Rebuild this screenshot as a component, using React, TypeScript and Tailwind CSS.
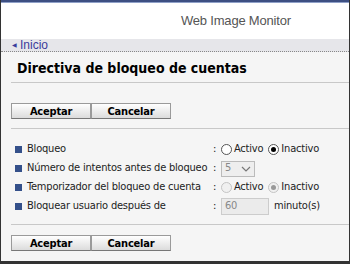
const Boton = ({ texto }: { texto: string }) => (
  <button className="w-[80px] h-[16px] flex items-center justify-center border border-[#9a9a9a] border-b-[#777] bg-gradient-to-b from-white to-[#dcdcdc] text-[11px] font-bold text-black leading-none">
    {texto}
  </button>
);

const Radio = ({ marcado, desactivado }: { marcado: boolean; desactivado?: boolean }) => (
  <span
    className={`w-[11px] h-[11px] rounded-full border flex items-center justify-center ${
      desactivado ? "border-[#c4c4c4] bg-[#f0f0f0]" : "border-[#555] bg-white"
    }`}
  >
    {marcado && (
      <span className={`w-[5px] h-[5px] rounded-full ${desactivado ? "bg-[#999]" : "bg-black"}`} />
    )}
  </span>
);

const Fila = ({ etiqueta, children }: { etiqueta: string; children: React.ReactNode }) => (
  <div className="flex items-center h-[19px] whitespace-nowrap">
    <span className="w-[7px] h-[7px] bg-[#34508a] ml-[4px] mr-[5px]" />
    <span className="w-[186px]">{etiqueta}</span>
    <span className="w-[8px]">:</span>
    <div className="flex items-center">{children}</div>
  </div>
);

export default function App() {
  return (
    <div
      className="w-[350px] h-[264px] bg-[#f5f5f5] border-x border-b-[3px] border-x-[#333] border-b-[#333] flex flex-col text-[11px] tracking-[-0.2px] text-[#222] overflow-hidden"
      style={{ fontFamily: '"DejaVu Sans Condensed", "DejaVu Sans", Verdana, sans-serif' }}
    >
      <div className="h-[3px] bg-[#3d4f82] border-b border-[#8fa0c8]" />
      <div className="h-[36px] bg-white flex items-center pl-[180px]">
        <span
          className="text-[13px] tracking-[-0.2px] text-[#555]"
          style={{ fontFamily: '"Liberation Sans", Arial, sans-serif' }}
        >
          Web Image Monitor
        </span>
      </div>
      <div
        className="h-[13px] bg-[#e6e6ea] border-b border-dotted border-[#888] flex items-center pl-[11px] text-[12px] tracking-normal text-[#3b3b9b]"
        style={{ fontFamily: '"Liberation Sans", Arial, sans-serif' }}
      >
        <span className="text-[6px] mr-[3px]">◀</span>
        Inicio
      </div>
      <div className="pl-[10px]">
        <div className="border-b border-[#c8c8c8] pl-[6px] pt-[9px] pb-[7px]">
          <h1 className="text-[14px] tracking-normal font-bold text-black leading-[14px]">
            Directiva de bloqueo de cuentas
          </h1>
        </div>
        <div className="flex pt-[20px] pb-[9px] border-b border-[#c8c8c8]">
          <Boton texto="Aceptar" />
          <Boton texto="Cancelar" />
        </div>
        <div className="pt-[11px] pb-[8px] border-b border-[#c8c8c8]">
          <Fila etiqueta="Bloqueo">
            <Radio marcado={false} />
            <span className="ml-[2px] mr-[5px]">Activo</span>
            <Radio marcado />
            <span className="ml-[2px]">Inactivo</span>
          </Fila>
          <Fila etiqueta="Número de intentos antes de bloqueo">
            <div className="w-[34px] h-[16px] border border-[#bbb] bg-[#eee] text-[#888] flex items-center justify-between px-[3px]">
              <span>5</span>
              <svg width="10" height="6" viewBox="0 0 10 6" fill="none" stroke="#777" strokeWidth="1.2">
                <path d="M1 1l4 4 4-4" />
              </svg>
            </div>
          </Fila>
          <Fila etiqueta="Temporizador del bloqueo de cuenta">
            <Radio marcado={false} desactivado />
            <span className="ml-[2px] mr-[5px]">Activo</span>
            <Radio marcado desactivado />
            <span className="ml-[2px]">Inactivo</span>
          </Fila>
          <Fila etiqueta="Bloquear usuario después de">
            <div className="w-[48px] h-[17px] border border-[#ccc] bg-[#ebebeb] text-[#888] flex items-center px-[3px]">
              60
            </div>
            <span className="ml-[5px]">minuto(s)</span>
          </Fila>
        </div>
        <div className="flex pt-[10px]">
          <Boton texto="Aceptar" />
          <Boton texto="Cancelar" />
        </div>
      </div>
    </div>
  );
}
